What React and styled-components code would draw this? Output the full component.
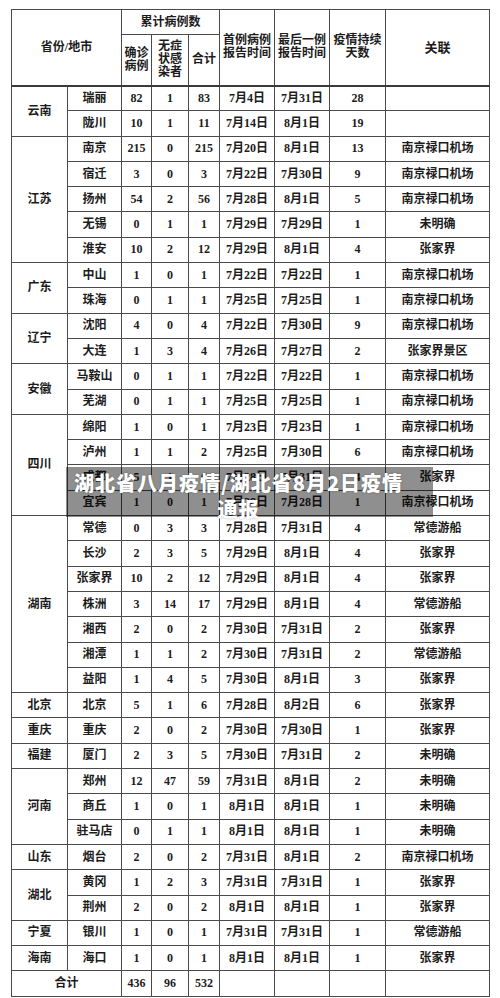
import React from "react";
import styled, { createGlobalStyle } from "styled-components";

const Global = createGlobalStyle`
  html, body { margin: 0; padding: 0; background: #fff; }
  body { font-family: "Liberation Serif", "Noto Sans CJK SC", serif; }
`;

const Page = styled.div`
  position: relative;
  width: 500px;
  padding: 9px 11px 0;
  box-sizing: border-box;
`;

const Table = styled.table`
  width: 478px;
  table-layout: fixed;
  border-collapse: collapse;
  color: #1c1c1c;
  font-family: "Liberation Serif", "Noto Sans CJK SC", serif;
  font-size: 12px;
  font-weight: 700;
  border: 1px solid #3a3a3a;
`;

const Cell = styled.td`
  border: 1px solid #4a4a4a;
  padding: 0;
  text-align: center;
  vertical-align: middle;
  line-height: 13px;
  white-space: nowrap;
`;

const Head = styled.th`
  border: 1px solid #4a4a4a;
  padding: 0;
  text-align: center;
  vertical-align: middle;
  line-height: ${(p) => p.$lh || 13}px;
  font-weight: 700;
  font-size: ${(p) => p.$size || 12}px;
`;

const HeadRow = styled.tr`
  height: ${(p) => p.$h}px;
`;

const BodyRow = styled.tr`
  height: 25.3px;
`;

const HeaderBottom = styled.thead`
  border-bottom: 2px solid #3a3a3a;
`;

const Overlay = styled.div`
  position: absolute;
  left: 66px;
  top: 467px;
  width: 367px;
  height: 50px;
  box-sizing: border-box;
  padding: 3px 30px 0 8px;
  background: rgba(0, 0, 0, 0.44);
  color: #fff;
  font-family: "Noto Sans CJK SC", "Noto Sans", sans-serif;
  font-weight: 900;
  font-size: 20px;
  letter-spacing: 1px;
  line-height: 26px;
  text-align: center;
  white-space: nowrap;
  text-shadow: 0 0 2px rgba(0, 0, 0, 0.35);
`;

const widths = [56, 54, 30, 37, 31, 55, 55, 56, 104];

const data = [
  { p: "云南", rows: [
    ["瑞丽", 82, 1, 83, "7月4日", "7月31日", 28, ""],
    ["陇川", 10, 1, 11, "7月14日", "8月1日", 19, ""],
  ]},
  { p: "江苏", rows: [
    ["南京", 215, 0, 215, "7月20日", "8月1日", 13, "南京禄口机场"],
    ["宿迁", 3, 0, 3, "7月22日", "7月30日", 9, "南京禄口机场"],
    ["扬州", 54, 2, 56, "7月28日", "8月1日", 5, "南京禄口机场"],
    ["无锡", 0, 1, 1, "7月29日", "7月29日", 1, "未明确"],
    ["淮安", 10, 2, 12, "7月29日", "8月1日", 4, "张家界"],
  ]},
  { p: "广东", rows: [
    ["中山", 1, 0, 1, "7月22日", "7月22日", 1, "南京禄口机场"],
    ["珠海", 0, 1, 1, "7月25日", "7月25日", 1, "南京禄口机场"],
  ]},
  { p: "辽宁", rows: [
    ["沈阳", 4, 0, 4, "7月22日", "7月30日", 9, "南京禄口机场"],
    ["大连", 1, 3, 4, "7月26日", "7月27日", 2, "张家界景区"],
  ]},
  { p: "安徽", rows: [
    ["马鞍山", 0, 1, 1, "7月22日", "7月22日", 1, "南京禄口机场"],
    ["芜湖", 0, 1, 1, "7月25日", "7月25日", 1, "南京禄口机场"],
  ]},
  { p: "四川", rows: [
    ["绵阳", 1, 0, 1, "7月23日", "7月23日", 1, "南京禄口机场"],
    ["泸州", 1, 1, 2, "7月25日", "7月30日", 6, "南京禄口机场"],
    ["成都", 5, 1, 6, "7月28日", "7月31日", 4, "张家界"],
    ["宜宾", 1, 0, 1, "7月28日", "7月28日", 1, "南京禄口机场"],
  ]},
  { p: "湖南", rows: [
    ["常德", 0, 3, 3, "7月28日", "7月31日", 4, "常德游船"],
    ["长沙", 2, 3, 5, "7月29日", "8月1日", 4, "张家界"],
    ["张家界", 10, 2, 12, "7月29日", "8月1日", 4, "张家界"],
    ["株洲", 3, 14, 17, "7月29日", "8月1日", 4, "常德游船"],
    ["湘西", 2, 0, 2, "7月30日", "7月31日", 2, "张家界"],
    ["湘潭", 1, 1, 2, "7月30日", "7月31日", 2, "常德游船"],
    ["益阳", 1, 4, 5, "7月30日", "8月1日", 3, "张家界"],
  ]},
  { p: "北京", rows: [["北京", 5, 1, 6, "7月28日", "8月2日", 6, "张家界"]] },
  { p: "重庆", rows: [["重庆", 2, 0, 2, "7月30日", "7月30日", 1, "张家界"]] },
  { p: "福建", rows: [["厦门", 2, 3, 5, "7月30日", "7月31日", 2, "未明确"]] },
  { p: "河南", rows: [
    ["郑州", 12, 47, 59, "7月31日", "8月1日", 2, "未明确"],
    ["商丘", 1, 0, 1, "8月1日", "8月1日", 1, "未明确"],
    ["驻马店", 0, 1, 1, "8月1日", "8月1日", 1, "未明确"],
  ]},
  { p: "山东", rows: [["烟台", 2, 0, 2, "7月31日", "8月1日", 2, "南京禄口机场"]] },
  { p: "湖北", rows: [
    ["黄冈", 1, 2, 3, "7月31日", "7月31日", 1, "张家界"],
    ["荆州", 2, 0, 2, "8月1日", "8月1日", 1, "张家界"],
  ]},
  { p: "宁夏", rows: [["银川", 1, 0, 1, "7月31日", "7月31日", 1, "常德游船"]] },
  { p: "海南", rows: [["海口", 1, 0, 1, "8月1日", "8月1日", 1, "张家界"]] },
];

export default function App() {
  return (
    <Page>
      <Global />
      <Table>
        <colgroup>
          {widths.map((w, i) => (
            <col key={i} style={{ width: w }} />
          ))}
        </colgroup>
        <HeaderBottom>
          <HeadRow $h={25}>
            <Head colSpan={2} rowSpan={2}>省份/地市</Head>
            <Head colSpan={3}>累计病例数</Head>
            <Head rowSpan={2}>首例病例<br />报告时间</Head>
            <Head rowSpan={2}>最后一例<br />报告时间</Head>
            <Head rowSpan={2}>疫情持续<br />天数</Head>
            <Head rowSpan={2} $size={13}>关联</Head>
          </HeadRow>
          <HeadRow $h={51}>
            <Head>确诊<br />病例</Head>
            <Head>无症<br />状感<br />染者</Head>
            <Head>合计</Head>
          </HeadRow>
        </HeaderBottom>
        <tbody>
          {data.map((g) =>
            g.rows.map((r, i) => (
              <BodyRow key={g.p + r[0]}>
                {i === 0 && <Cell rowSpan={g.rows.length}>{g.p}</Cell>}
                {r.map((v, j) => (
                  <Cell key={j}>{v}</Cell>
                ))}
              </BodyRow>
            ))
          )}
          <BodyRow>
            <Cell colSpan={2}>合计</Cell>
            <Cell>436</Cell>
            <Cell>96</Cell>
            <Cell>532</Cell>
            <Cell />
            <Cell />
            <Cell />
            <Cell />
          </BodyRow>
        </tbody>
      </Table>
      <Overlay>
        湖北省八月疫情/湖北省8月2日疫情
        <br />
        通报
      </Overlay>
    </Page>
  );
}
